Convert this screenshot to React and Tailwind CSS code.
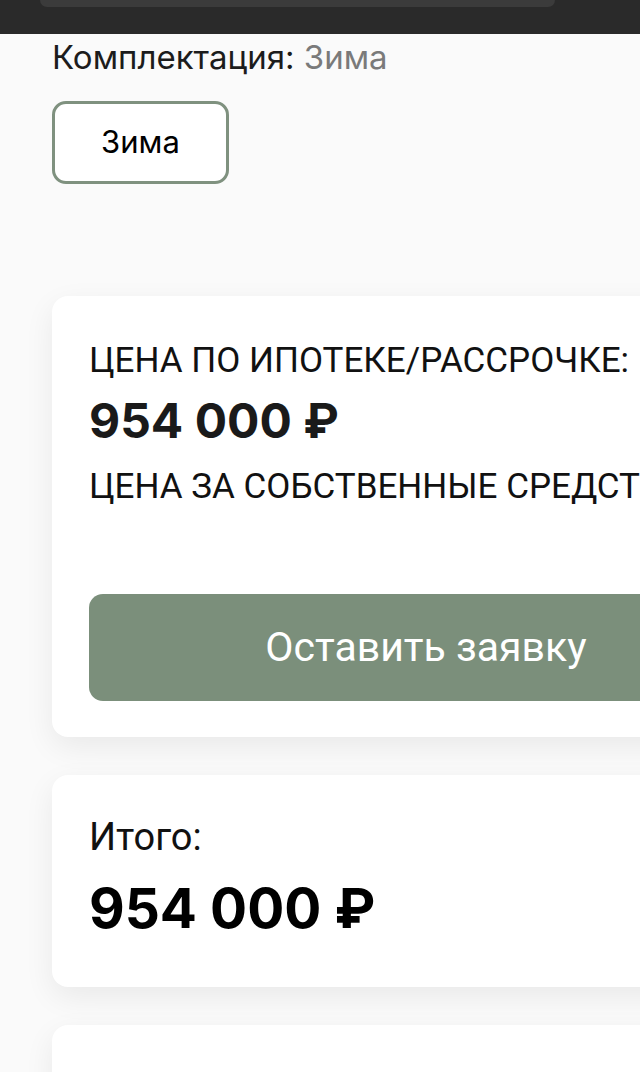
import React from 'react';

const roboto = { fontFamily: 'Roboto, "Liberation Sans", sans-serif' };
const inter = { fontFamily: 'Inter, "Noto Sans", sans-serif' };

export default function App() {
  return (
    <div className="w-[640px] h-[1072px] overflow-hidden bg-[#fafafa]" style={roboto}>
      {/* top bar */}
      <div className="h-[34px] bg-[#2a2a2a] px-[40px]">
        <div className="h-[7px] w-[515px] rounded-b-[22px] bg-[#3b3b3b]" />
      </div>

      <div className="pl-[52px]">
        <div className="mt-[3px] whitespace-nowrap text-[33px] leading-[40px] text-[#1c1c1c]" style={inter}>
          Комплектация: <span className="text-[#7a7a7a]">Зима</span>
        </div>

        <div className="mt-[24px] flex h-[83px] w-[177px] items-center justify-center rounded-[14px] border-[3px] border-[#7f917f] bg-white text-[31px] text-black" style={inter}>
          Зима
        </div>

        {/* price card */}
        <div className="mt-[112px] w-[750px] rounded-[16px] bg-white pl-[37px] pt-[45px] pb-[36px] shadow-[0_10px_30px_rgba(0,0,0,0.07)]">
          <div className="whitespace-nowrap text-[35px] leading-[40px] text-[#111]">ЦЕНА ПО ИПОТЕКЕ/РАССРОЧКЕ:</div>
          <div className="mt-[14px] text-[48px] font-bold leading-[52px] text-[#1a1a1a]" style={inter}>
            954 000 ₽
          </div>
          <div className="mt-[20px] whitespace-nowrap text-[35px] leading-[40px] text-[#111]">ЦЕНА ЗА СОБСТВЕННЫЕ СРЕДСТВА:</div>
          <button className="mt-[87px] flex h-[107px] w-[674px] items-center justify-center rounded-[14px] bg-[#7b8f7b] text-[41px] text-white">
            Оставить заявку
          </button>
        </div>

        {/* total card */}
        <div className="mt-[38px] h-[212px] w-[750px] rounded-[16px] bg-white pl-[37px] pt-[40px] shadow-[0_10px_30px_rgba(0,0,0,0.07)]">
          <div className="text-[38px] leading-[44px] text-[#111]">Итого:</div>
          <div className="mt-[19px] text-[55px] font-bold leading-[60px] text-black" style={inter}>
            954 000 ₽
          </div>
        </div>

        <div className="mt-[38px] h-[200px] w-[750px] rounded-[16px] bg-white shadow-[0_10px_30px_rgba(0,0,0,0.07)]" />
      </div>
    </div>
  );
}
